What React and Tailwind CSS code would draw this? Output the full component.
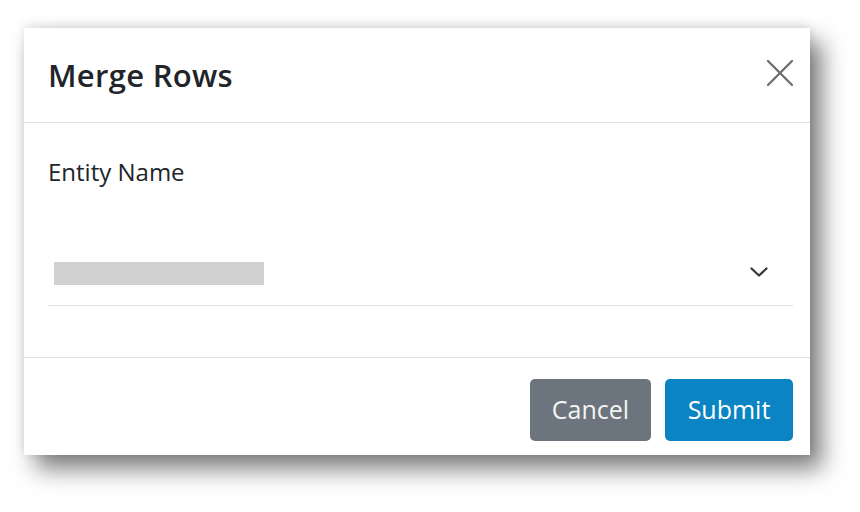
import React from 'react'

export default function App() {
  return (
    <div className="w-[860px] h-[512px] bg-white pt-[28px] pl-[24px]" style={{ fontFamily: '"Open Sans", "Noto Sans", sans-serif' }}>
      <div className="w-[786px] h-[427px] bg-white flex flex-col shadow-[0_-2px_10px_rgba(0,0,0,0.12),12px_14px_22px_rgba(0,0,0,0.5)]">
        {/* Header */}
        <div className="h-[95px] shrink-0 flex items-center justify-between pl-[24px] pr-[16px] border-b border-[#dee2e6]">
          <h2 className="text-[31px] font-semibold text-[#212529] tracking-[0.3px]">Merge Rows</h2>
          <button className="w-[28px] h-[28px] flex items-center justify-center -mt-[4px]">
            <svg width="28" height="28" viewBox="0 0 28 28" fill="none" stroke="#6b6b6b" strokeWidth="2.2" strokeLinecap="round">
              <path d="M2 2L26 26M26 2L2 26" />
            </svg>
          </button>
        </div>

        {/* Body */}
        <div className="h-[235px] shrink-0 flex flex-col pl-[24px] pr-[17px] border-b border-[#dee2e6]">
          <label className="mt-[34px] text-[24px] text-[#212529] leading-[30px]">Entity Name</label>
          <div className="mt-[60px] h-[59px] flex items-center justify-between border-b border-[#dee2e6]">
            <div className="ml-[6px] -mt-[6px] w-[210px] h-[23px] bg-[#d1d1d1]" />
            <svg width="20" height="12" viewBox="0 0 20 12" fill="none" stroke="#343a40" strokeWidth="2.3" strokeLinecap="round" strokeLinejoin="round" className="mr-[24px] -mt-[8px]">
              <path d="M2.5 2.5l7.5 7 7.5-7" />
            </svg>
          </div>
        </div>

        {/* Footer */}
        <div className="flex-1 flex justify-end items-start gap-[14px] pt-[21px] pr-[17px]">
          <button className="w-[121px] h-[62px] rounded-[5px] bg-[#6c757d] text-[#f4f4f4] text-[25px]">Cancel</button>
          <button className="w-[128px] h-[62px] rounded-[5px] bg-[#0a84c2] text-white text-[25px]">Submit</button>
        </div>
      </div>
    </div>
  )
}
